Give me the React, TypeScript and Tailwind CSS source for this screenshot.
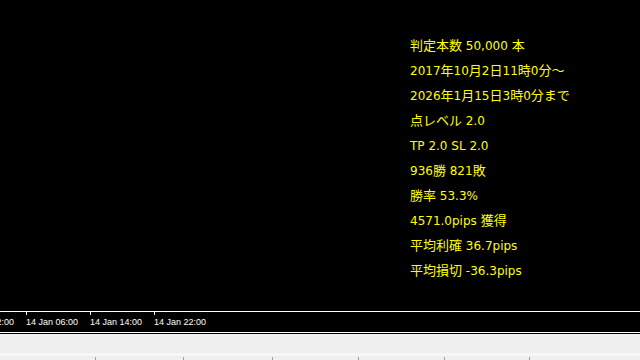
const lines = [
  "判定本数 50,000 本",
  "2017年10月2日11時0分～",
  "2026年1月15日3時0分まで",
  "点レベル 2.0",
  "TP 2.0 SL 2.0",
  "936勝 821敗",
  "勝率 53.3%",
  "4571.0pips 獲得",
  "平均利確 36.7pips",
  "平均損切 -36.3pips",
]

const ticks = ["13 Jan 22:00", "14 Jan 06:00", "14 Jan 14:00", "14 Jan 22:00"]

const columns = [96, 88, 89, 86, 86, 85]

// split a line into runs of wide (CJK) and narrow (latin) characters
function runs(text: string) {
  return text.match(/[\u3000-\u9fff\uff00-\uffef]+|[^\u3000-\u9fff\uff00-\uffef]+/g) ?? []
}

function StatLine({ text }: { text: string }) {
  return (
    <div className="h-[25px] whitespace-nowrap leading-[25px]">
      {runs(text).map((r, i) =>
        /[\u3000-\u9fff\uff00-\uffef]/.test(r) ? (
          <span key={i} className="font-['Noto_Sans_CJK_JP',sans-serif] text-[13px]">
            {r}
          </span>
        ) : (
          <span key={i} className="font-['DejaVu_Sans',sans-serif] text-[12px]">
            {r}
          </span>
        ),
      )}
    </div>
  )
}

export default function App() {
  return (
    <div className="flex h-[360px] w-[640px] flex-col overflow-hidden bg-black">
      {/* chart area */}
      <div className="h-[311px] shrink-0 pl-[410px] pt-[32px] text-[#ffff00]">
        {lines.map((line) => (
          <StatLine key={line} text={line} />
        ))}
      </div>

      {/* time axis */}
      <div className="flex h-[22px] shrink-0 border-y border-white">
        <div className="ml-[-38px] flex">
          {ticks.map((t) => (
            <div key={t} className="flex w-[64px] flex-col">
              <div className="h-[3px] w-px bg-white" />
              <div className="mt-px whitespace-nowrap font-['Liberation_Sans',sans-serif] text-[9px] leading-[12px] text-white">
                {t}
              </div>
            </div>
          ))}
        </div>
      </div>
      <div className="h-px shrink-0 bg-black" />

      {/* panel */}
      <div className="h-[20px] shrink-0 bg-[#f0f0f0]" />
      <div className="h-px shrink-0 bg-white" />
      <div className="flex h-[5px] shrink-0 bg-[#f0f0f0] pt-[2px]">
        {columns.map((w, i) => (
          <div key={i} style={{ width: w }} className="h-full shrink-0 border-r border-[#a0a0a0]" />
        ))}
      </div>
    </div>
  )
}
